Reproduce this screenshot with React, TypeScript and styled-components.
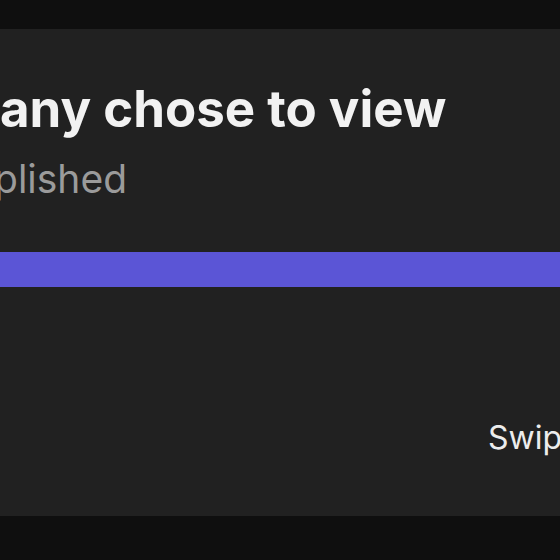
import React from "react";
import styled, { createGlobalStyle } from "styled-components";

const Global = createGlobalStyle`
  html, body { margin: 0; padding: 0; background: #0f0f0f; }
  body { font-family: Inter, "Noto Sans", sans-serif; }
`;

const Page = styled.div`
  width: 560px;
  height: 560px;
  background: #0f0f0f;
  padding-top: 29px;
  box-sizing: border-box;
  overflow: hidden;
`;

const Panel = styled.section`
  height: 487px;
  background: #212121;
  overflow: hidden;
  display: flex;
  flex-direction: column;
`;

const Header = styled.header`
  display: flex;
  flex-direction: column;
  padding-top: 50px;
  gap: 16px;
`;

const Title = styled.h1<{ $shift: number }>`
  margin: 0 0 0 ${(p) => p.$shift}px;
  font-size: 51px;
  line-height: 60px;
  font-weight: 700;
  color: #f2f2f2;
  white-space: nowrap;
`;

const Subtitle = styled.p<{ $shift: number }>`
  margin: 0 0 0 ${(p) => p.$shift}px;
  font-size: 39px;
  line-height: 48px;
  font-weight: 400;
  color: #9b9b9b;
  white-space: nowrap;
`;

const Progress = styled.div`
  margin-top: 49px;
  height: 35px;
  background: #5b55d6;
  flex-shrink: 0;
`;

const Footer = styled.footer`
  margin-top: auto;
  padding: 0 0 60px 488px;
  display: flex;
`;

const Hint = styled.span`
  font-size: 32px;
  line-height: 36px;
  color: #ececec;
  white-space: nowrap;
`;

export default function App() {
  return (
    <>
      <Global />
      <Page>
        <Panel>
          <Header>
            <Title $shift={0}>any chose to view</Title>
            <Subtitle $shift={-6}>plished</Subtitle>
          </Header>
          <Progress />
          <Footer>
            <Hint>Swipe</Hint>
          </Footer>
        </Panel>
      </Page>
    </>
  );
}
